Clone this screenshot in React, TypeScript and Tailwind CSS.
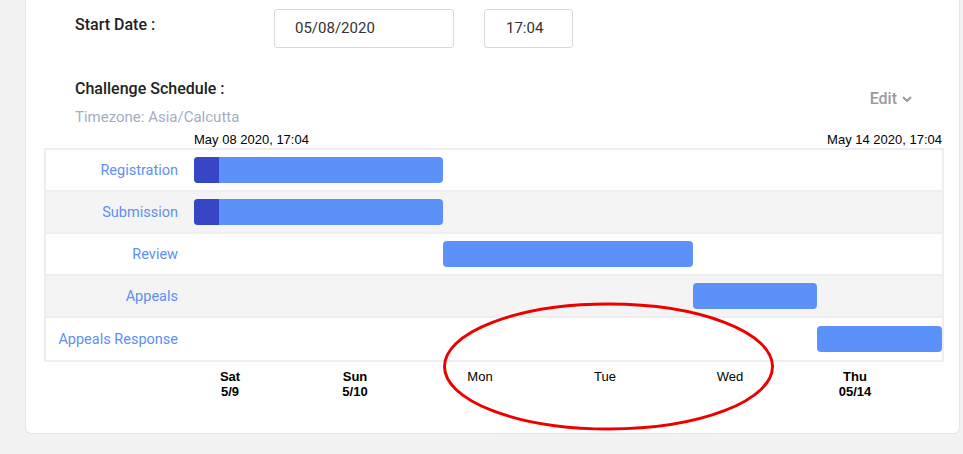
import React from "react";

const rows = [
  { label: "Registration", start: 1, span: 2, dark: true, bg: "bg-white" },
  { label: "Submission", start: 1, span: 2, dark: true, bg: "bg-[#f4f4f4]" },
  { label: "Review", start: 3, span: 2, dark: false, bg: "bg-white" },
  { label: "Appeals", start: 5, span: 1, dark: false, bg: "bg-[#f4f4f4]" },
  { label: "Appeals Response", start: 6, span: 1, dark: false, bg: "bg-white" },
];

const colStart: Record<number, string> = {
  1: "col-start-1",
  3: "col-start-3",
  5: "col-start-5",
  6: "col-start-6",
};
const colSpan: Record<number, string> = {
  1: "col-span-1",
  2: "col-span-2",
};

const days = [
  { d: "Sat", s: "5/9", bold: true },
  { d: "Sun", s: "5/10", bold: true },
  { d: "Mon", s: "", bold: false },
  { d: "Tue", s: "", bold: false },
  { d: "Wed", s: "", bold: false },
  { d: "Thu", s: "05/14", bold: true },
];

export default function App() {
  return (
    <div className="relative h-[454px] w-[963px] overflow-hidden bg-[#f2f2f2] pl-[25px] font-['Roboto',sans-serif]">
      <div className="h-[434px] w-[935px] rounded-b-[6px] border border-t-0 border-[#e6e6e6] bg-white">
        {/* Start date row */}
        <div className="flex items-start pl-[49px] pt-[9px]">
          <div className="mt-[6px] w-[199px] text-[16px] font-medium leading-[19px] text-[#222]">
            Start Date :
          </div>
          <div className="flex h-[39px] w-[180px] items-center rounded-[3px] border border-[#d9d9d9] pl-[20px] text-[15px] text-[#333]">
            05/08/2020
          </div>
          <div className="ml-[30px] flex h-[39px] w-[89px] items-center rounded-[3px] border border-[#d9d9d9] pl-[21px] text-[15px] text-[#333]">
            17:04
          </div>
        </div>

        {/* Challenge schedule header */}
        <div className="mt-[31px] flex items-start justify-between pl-[49px] pr-[47px]">
          <div>
            <div className="text-[16px] font-medium leading-[19px] text-[#222]">
              Challenge Schedule :
            </div>
            <div className="mt-[10px] text-[15px] leading-[18px] text-[#a3aebf]">
              Timezone: Asia/Calcutta
            </div>
          </div>
          <div className="mt-[10px] flex items-center gap-[5px] text-[16px] font-medium leading-[19px] text-[#9a9a9a]">
            <span>Edit</span>
            <svg width="10" height="7" viewBox="0 0 10 7" className="mt-[1px]">
              <path d="M1.5 1.5 L5 5 L8.5 1.5" fill="none" stroke="#9a9a9a" strokeWidth="2" strokeLinecap="round" strokeLinejoin="round" />
            </svg>
          </div>
        </div>

        {/* Chart */}
        <div className="ml-[18px] mt-[6px] w-[900px] font-['Liberation_Sans',Arial,sans-serif] text-black">
          <div className="flex h-[16px] justify-between pl-[150px] pr-[2px] text-[13px] leading-[15px]">
            <span>May 08 2020, 17:04</span>
            <span>May 14 2020, 17:04</span>
          </div>
          <div className="divide-y-2 divide-[#eeeeee] border-2 border-[#eeeeee]">
            {rows.map((r) => (
              <div key={r.label} className={`flex h-[42px] ${r.bg}`}>
                <div className="flex w-[148px] items-center justify-end pr-[16px] pt-[1px] font-['Roboto',sans-serif] text-[14.5px] text-[#5e8ff5]">
                  {r.label}
                </div>
                <div className="grid flex-1 grid-cols-6 items-center">
                  <div
                    className={`${colStart[r.start]} ${colSpan[r.span]} flex h-[26px] overflow-hidden rounded-[4px] bg-[#5c91fa]`}
                  >
                    {r.dark && <div className="w-[25px] bg-[#3746c4]" />}
                  </div>
                </div>
              </div>
            ))}
          </div>
          <div className="mt-[7px] grid grid-cols-6 pl-[150px] text-[13px] leading-[15px]">
            {days.map((d) => (
              <div key={d.d} className={`w-[72px] text-center ${d.bold ? "font-bold" : ""}`}>
                <div>{d.d}</div>
                {d.s && <div>{d.s}</div>}
              </div>
            ))}
          </div>
        </div>
      </div>

      {/* Red annotation ellipse */}
      <svg
        className="pointer-events-none absolute left-[441px] top-[301px]"
        width="336"
        height="132"
        viewBox="0 0 336 132"
      >
        <ellipse cx="167.5" cy="65.5" rx="164" ry="62.5" fill="none" stroke="#ee0000" strokeWidth="3" />
      </svg>
    </div>
  );
}
